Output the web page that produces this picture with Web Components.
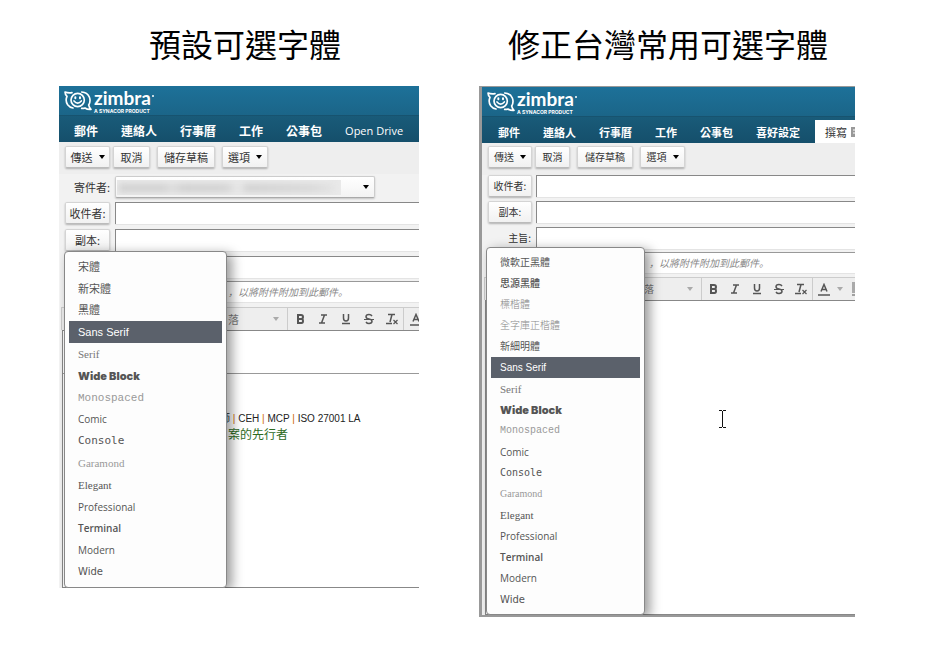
<!DOCTYPE html>
<html lang="zh-Hant">
<head>
<meta charset="utf-8">
<title>可選字體比較</title>
<style>
  body { margin: 0; background: #fff; font-family: "Liberation Sans", "Noto Sans CJK TC", sans-serif; }
</style>
</head>
<body>
<compare-board>
  <compare-column style="--lead:12px">
    <span slot="title">預設可選字體</span>
    <mail-window style="--size:11px; --nav-size:12px; --row:27px; --label:45px; --label-gap:5px; --tool:23px">
      <app-header slot="header"></app-header>
      <nav-bar slot="header">
        <nav-tab>郵件</nav-tab><nav-tab>連絡人</nav-tab><nav-tab>行事曆</nav-tab><nav-tab>工作</nav-tab><nav-tab>公事包</nav-tab><nav-tab plain>Open Drive</nav-tab>
      </nav-bar>
      <action-bar slot="header">
        <push-button arrow style="width:45px">傳送</push-button><push-button style="width:37px;margin-right:4px">取消</push-button><push-button style="width:58px;margin-right:4px">儲存草稿</push-button><push-button arrow style="width:46px">選項</push-button>
      </action-bar>
      <sender-field>寄件者:</sender-field>
      <mail-field kind="button" name="收件者">收件者:</mail-field>
      <mail-field kind="button" name="副本">副本:</mail-field>
      <mail-field kind="bare" name="主旨" style="--row:25px"></mail-field>
      <attach-hint style="--row:26px; --indent:163px">，以將附件附加到此郵件。</attach-hint>
      <editor-tools style="--format:226px; --indent:166px"></editor-tools>
      <editor-area style="--height:258px"><mail-signature></mail-signature></editor-area>
      <font-menu slot="menu" style="--top:165px; --left:5px; --width:163px; --bottom:0px">
        <font-item>宋體</font-item><font-item>新宋體</font-item><font-item>黑體</font-item>
        <font-item selected>Sans Serif</font-item>
        <font-item face="serif">Serif</font-item>
        <font-item face="block">Wide Block</font-item>
        <font-item face="mono">Monospaced</font-item>
        <font-item face="comic">Comic</font-item>
        <font-item face="console">Console</font-item>
        <font-item face="garamond">Garamond</font-item>
        <font-item face="elegant">Elegant</font-item>
        <font-item face="pro">Professional</font-item>
        <font-item face="terminal">Terminal</font-item>
        <font-item face="modern">Modern</font-item>
        <font-item face="wide">Wide</font-item>
      </font-menu>
    </mail-window>
  </compare-column>

  <compare-column style="--lead:2px">
    <span slot="title">修正台灣常用可選字體</span>
    <mail-window framed style="--size:10px; --nav-size:11px; --row:26px; --label:44px; --label-gap:4px; --tool:22px; --nav-start:16px">
      <app-header slot="header"></app-header>
      <nav-bar slot="header">
        <nav-tab>郵件</nav-tab><nav-tab>連絡人</nav-tab><nav-tab>行事曆</nav-tab><nav-tab>工作</nav-tab><nav-tab>公事包</nav-tab><nav-tab>喜好設定</nav-tab><nav-tab active>撰寫</nav-tab>
      </nav-bar>
      <action-bar slot="header" style="--pad:3px">
        <push-button arrow style="width:44px">傳送</push-button><push-button style="width:35px;margin-right:4px">取消</push-button><push-button style="width:56px;margin-right:4px">儲存草稿</push-button><push-button arrow style="width:45px">選項</push-button>
      </action-bar>
      <mail-field kind="button" name="收件者">收件者:</mail-field>
      <mail-field kind="button" name="副本">副本:</mail-field>
      <mail-field kind="label" name="主旨" style="--row:25px">主旨:</mail-field>
      <attach-hint style="--row:25px; --indent:161px">，以將附件附加到此郵件。</attach-hint>
      <editor-tools more style="--format:217px; --indent:159px"></editor-tools>
      <editor-area style="--height:315px"><text-cursor></text-cursor></editor-area>
      <font-menu slot="menu" style="--top:160px; --left:4px; --width:159px; --bottom:0px; --item:10px">
        <font-item>微軟正黑體</font-item><font-item face="bolder">思源黑體</font-item>
        <font-item face="kai">標楷體</font-item><font-item face="kai">全字庫正楷體</font-item>
        <font-item>新細明體</font-item>
        <font-item selected>Sans Serif</font-item>
        <font-item face="serif">Serif</font-item>
        <font-item face="block">Wide Block</font-item>
        <font-item face="mono">Monospaced</font-item>
        <font-item face="comic">Comic</font-item>
        <font-item face="console">Console</font-item>
        <font-item face="garamond">Garamond</font-item>
        <font-item face="elegant">Elegant</font-item>
        <font-item face="pro">Professional</font-item>
        <font-item face="terminal">Terminal</font-item>
        <font-item face="modern">Modern</font-item>
        <font-item face="wide">Wide</font-item>
      </font-menu>
    </mail-window>
  </compare-column>
</compare-board>

<script>
const CJK = '"Noto Sans CJK TC", sans-serif';
const ARROW = '<svg class="arrow" width="6" height="4" viewBox="0 0 6 4" aria-hidden="true"><path d="M0 0H6L3 4Z" fill="currentColor"/></svg>';

function define(name, css, html, setup) {
  const template = document.createElement('template');
  template.innerHTML = `<style>*{box-sizing:border-box}:host{box-sizing:border-box}${css}</style>${html}`;
  customElements.define(name, class extends HTMLElement {
    constructor() {
      super();
      this.attachShadow({ mode: 'open' }).append(template.content.cloneNode(true));
    }
    connectedCallback() { if (setup) setup(this, this.shadowRoot); }
  });
}

define('compare-board', `
  :host { display: grid; grid-template-columns: 360fr 376fr; column-gap: 60px; align-items: start; padding: 19px 71px 20px 59px; }
`, '<slot></slot>');

define('compare-column', `
  :host { display: block; min-width: 0; }
  h1 { margin: 0 0 19px; padding-left: var(--lead); text-align: center; font: 400 32px/48px ${CJK}; color: #000; white-space: nowrap; }
`, '<h1><slot name="title"></slot></h1><slot></slot>');

define('mail-window', `
  :host { display: block; position: relative; background: #f2f2f2; color: #333; font-size: var(--size); }
  :host([framed]) { border: solid #999; border-width: 1px 0 2px 3px; }
  .clip { overflow: hidden; }
`, '<div class="clip"><slot name="header"></slot><slot></slot></div><slot name="menu"></slot>');

define('app-header', `
  :host { display: flex; height: 30px; padding: 2px 0 0 5px; gap: 2px; color: #fff; background: linear-gradient(#1d7199, #1b6588); border-bottom: 1px solid #17536f; }
  .mark { margin-top: 3px; }
  .name { display: flex; font: 700 19px/20px Lato, sans-serif; }
  .name i { width: 2px; height: 2px; margin: 7px 0 0 1px; border-radius: 1px; background: #fff; }
  .words { display: flex; flex-direction: column; }
  small { font: 700 5px/6px Inter, sans-serif; white-space: nowrap; }
`, `
  <svg class="mark" width="28" height="20" viewBox="0 0 84 60" fill="none" stroke="#fff" stroke-width="5" stroke-linejoin="round" stroke-linecap="round" aria-hidden="true">
    <circle cx="41" cy="27" r="20"/>
    <path d="M24 5Q13 7 3 3Q3 10 9 16Q3 29 11 41Q17 49 27 51"/>
    <path d="M53 3Q70 4 76 18Q81 31 74 42Q76 51 81 55Q70 56 63 51Q58 53 53 52"/>
    <path d="M30 30Q41 43 52 30"/>
    <path d="M34 19V22M48 19V22" stroke-width="6"/>
  </svg>
  <div class="words"><span class="name">zimbra<i></i></span><small>A SYNACOR PRODUCT</small></div>`);

define('nav-bar', `
  :host { display: block; }
  nav { display: flex; height: 26px; gap: 23px; padding-left: var(--nav-start, 15px); background: linear-gradient(#195b79, #154f6b); overflow: hidden; }
`, '<nav aria-label="主選單"><slot></slot></nav>');

define('nav-tab', `
  :host { display: block; flex: none; }
  a { display: flex; align-items: center; height: 26px; padding-top: 3px; color: #fff; text-decoration: none; font: 700 var(--nav-size)/20px ${CJK}; white-space: nowrap; }
  :host([plain]) a { font: 400 11px/20px "Open Sans", sans-serif; }
  :host([active]) { margin: 3px 0 0 -8px; }
  :host([active]) a { height: 23px; gap: 4px; padding: 0 0 0 10px; width: 80px; background: #fff; color: #333; font-weight: 400; }
  svg { display: none; }
  :host([active]) svg { display: block; }
`, `<a href="#"><slot></slot><svg width="10" height="10" viewBox="0 0 10 10" aria-hidden="true"><rect width="10" height="10" fill="#999"/><path d="M2 3H8M2 6H8" stroke="#fff"/></svg></a>`);

define('action-bar', `
  :host { display: flex; gap: 3px; height: 32px; padding: var(--pad, 4px) 6px; background: #eee; }
`, '<slot></slot>');

define('push-button', `
  :host { display: block; }
  button { display: flex; align-items: center; justify-content: center; gap: 6px; width: 100%; height: 22px; padding: 0; border: 1px solid #d4d4d4; border-bottom-color: #bbb; border-radius: 2px; background: linear-gradient(#fff, #f1f1f1); box-shadow: 0 1px 2px #0004; color: #333; font: 400 var(--size)/16px ${CJK}; white-space: nowrap; }
  .arrow { display: none; color: #000; }
  :host([arrow]) .arrow { display: block; }
`, `<button type="button"><slot></slot>${ARROW}</button>`);

const FIELD = `
  :host { display: grid; grid-template-columns: var(--label) 1fr; column-gap: var(--label-gap); height: var(--row); padding-left: 6px; }
  label { display: block; align-self: start; text-align: right; font: 400 var(--size)/22px ${CJK}; }
`;
define('mail-field', FIELD + `
  input { display: block; width: 100%; height: 22px; border: solid #888; border-width: 1px 0 0 1px; border-radius: 0; background: #fff; padding: 0 4px; outline: 0; box-shadow: 0 1px #e4e4e4; }
  label { padding-right: 1px; }
`, '<div class="lead"></div><input id="f" type="text">', (host, root) => {
  const kind = host.getAttribute('kind');
  const lead = root.querySelector('.lead');
  if (kind === 'button') lead.innerHTML = '<push-button><slot></slot></push-button>';
  if (kind === 'label') lead.innerHTML = '<label for="f"><slot></slot></label>';
  else root.querySelector('input').setAttribute('aria-label', host.getAttribute('name'));
});

define('sender-field', FIELD + `
  :host { height: 28px; padding-top: 2px; }
  .box { display: grid; align-items: center; width: 260px; height: 22px; }
  .box > * { grid-area: 1 / 1; }
  select { appearance: none; width: 100%; height: 22px; border: 1px solid #ccc; border-bottom-color: #aaa; border-radius: 2px; box-shadow: 0 1px 2px #0003; background: linear-gradient(#fff, #f3f3f3); }
  .mask { width: 224px; height: 15px; margin-left: 2px; pointer-events: none; background: #e9e9e9; overflow: hidden; }
  .mask i { display: block; height: 8px; margin: 4px 8px 0 2px; filter: blur(3px); background: linear-gradient(90deg, #d0d0d0 20%, #dcdcdc 25%, #cfcfcf 30%, #d2d2d2 50%, #e9e9e9 56%, #d0d0d0 60%, #d8d8d8 90%, #e2e2e2); }
  .arrow { justify-self: end; margin-right: 6px; color: #000; pointer-events: none; }
`, `<label for="s"><slot></slot></label><div class="box"><select id="s"><option></option></select><span class="mask"><i></i></span>${ARROW}</div>`);

define('attach-hint', `
  :host { display: block; height: var(--row); padding-left: 6px; }
  p { margin: 0; height: 21px; padding-left: var(--indent); background: #fff; border-top: 1px solid #999; box-shadow: 0 1px #e4e4e4; font: italic 400 10px/20px "Noto Sans CJK SC", sans-serif; color: #888; white-space: nowrap; }
`, '<p lang="zh-Hans"><slot></slot></p>', host => { host.lang = 'zh-Hans'; });

define('editor-tools', `
  :host { display: flex; align-items: stretch; height: 23px; margin-left: 2px; background: #eee; border: solid #ccc; border-width: 1px 0 0 1px; color: #555; overflow: hidden; }
  .format { flex: none; display: grid; align-items: center; width: var(--format); border-right: 1px solid #ccc; padding-left: var(--indent); }
  .format > * { grid-area: 1 / 1; }
  select { appearance: none; width: 100%; height: 20px; padding: 0; border: 0; background: none; font: 400 var(--size)/16px ${CJK}; color: #777; }
  .arrow { color: #aaa; justify-self: end; margin-right: 8px; pointer-events: none; }
  button { flex: none; display: grid; place-items: center; width: var(--tool); padding: 0; border: 0; background: none; color: #555; }
  .sep { flex: none; width: 1px; background: #ccc; }
  .more { display: none; }
  :host([more]) .more { display: flex; align-items: center; flex: none; gap: 9px; }
  .more .arrow { margin: 0 0 0 2px; }
`, `
  <div class="format"><select aria-label="段落格式"><option>落</option></select>${ARROW}</div>
  <button type="button" aria-label="粗體"><svg width="12" height="12" viewBox="0 0 12 12" fill="none" stroke="currentColor" stroke-width="2"><path d="M4 2H7Q9 2 9 4Q9 6 7 6H4ZM4 6H7.5Q9 6 9 8Q9 10 7.5 10H4Z"/></svg></button>
  <button type="button" aria-label="斜體"><svg width="12" height="12" viewBox="0 0 12 12" fill="none" stroke="currentColor" stroke-width="1.5"><path d="M4 2H10M2 10H8M7.5 2L4.5 10"/></svg></button>
  <button type="button" aria-label="底線"><svg width="12" height="12" viewBox="0 0 12 12" fill="none" stroke="currentColor" stroke-width="1.5"><path d="M3.5 1V5Q3.5 8 6 8Q8.5 8 8.5 5V1M2 10.5H10"/></svg></button>
  <button type="button" aria-label="刪除線"><svg width="12" height="12" viewBox="0 0 12 12" fill="none" stroke="currentColor" stroke-width="1.5"><path d="M9 3Q8 1.5 6 1.5Q3 1.5 3 3.7Q3 5.5 6 6Q9 6.5 9 8.3Q9 10.5 6 10.5Q4 10.5 3 9"/><path d="M1 6.5H11" stroke-width="1"/></svg></button>
  <button type="button" aria-label="清除格式"><svg width="14" height="12" viewBox="0 0 14 12" fill="none" stroke="currentColor" stroke-width="1.5"><path d="M3 1.5H10M7 1.5L5 9M1 10.5H7"/><path d="M8.5 7L12.5 11M12.5 7L8.5 11" stroke-width="1.2"/></svg></button>
  <span class="sep"></span>
  <button type="button" aria-label="文字顏色"><svg width="12" height="13" viewBox="0 0 12 13" fill="none" stroke="currentColor" stroke-width="1.5"><path d="M3 8.5L6 1.5L9 8.5M4 6.5H8"/><path d="M0 12H12"/></svg></button>
  <span class="more">${ARROW}<svg width="12" height="14" viewBox="0 0 12 14" aria-hidden="true"><rect width="12" height="11" fill="#aaa"/><path d="M0 13H12" stroke="#555"/></svg></span>`);

define('editor-area', `
  :host { display: block; position: relative; height: var(--height); margin-left: 3px; background: #fff; border: solid #888; border-width: 1px 0 1px 1px; }
`, '<slot></slot>');

define('mail-signature', `
  :host { display: block; }
  hr { margin: 42px 0 38px; border: 0; border-top: 1px solid #999; }
  p { margin: 0; padding-left: 157px; font: 400 10px/14px "Liberation Sans", ${CJK}; color: #222; white-space: nowrap; }
  p + p { padding-left: 165px; font: 400 12px/16px ${CJK}; color: #2e6b1e; }
  b { font-weight: 400; color: #c60; }
`, '<hr><p>師 <b>|</b> CEH <b>|</b> MCP <b>|</b> ISO 27001 LA</p><p>案的先行者</p>');

define('text-cursor', `
  :host { position: absolute; left: 233px; top: 109px; }
  svg { display: block; }
`, '<svg width="7" height="18" viewBox="0 0 7 18" fill="none" stroke="#111" aria-hidden="true"><path d="M0 .5H3M4 .5H7M0 17.5H3M4 17.5H7M3.5 1V17"/></svg>');

define('font-menu', `
  :host { position: absolute; top: var(--top); left: var(--left); bottom: var(--bottom); width: var(--width); display: flex; flex-direction: column; padding: 4px; background: #fdfdfd; border: 1px solid #888; border-radius: 4px; box-shadow: 5px 3px 12px #0006; clip-path: inset(-10px -20px 0 -4px); }
`, '<slot></slot>', host => host.setAttribute('role', 'menu'));

define('font-item', `
  :host { display: flex; flex: 1 1 0; min-height: 0; }
  button { width: 100%; padding: 0 9px; border: 0; background: none; text-align: left; color: #555; white-space: nowrap; font: 400 11px/16px "Liberation Sans", ${CJK}; font-size: var(--item, 11px); }
  :host([selected]) button { background: #5b616b; color: #fff; }
  :host([face="serif"]) button { font-family: "Liberation Serif", serif; font-size: 11px; color: #777; }
  :host([face="block"]) button { font-family: Inter, sans-serif; font-size: 11px; font-weight: 900; }
  :host([face="mono"]) button { font-family: "Liberation Mono", monospace; color: #999; }
  :host([face="comic"]) button { font-family: "Open Sans", sans-serif; font-size: 10px; }
  :host([face="console"]) button { font-family: "DejaVu Sans Mono", monospace; }
  :host([face="garamond"]) button { font-family: "Liberation Serif", serif; color: #999; }
  :host([face="elegant"]) button { font-family: "Liberation Serif", serif; font-size: 11px; }
  :host([face="pro"]) button { font-family: "Open Sans", sans-serif; font-size: 10px; }
  :host([face="terminal"]) button { font-family: "Open Sans", sans-serif; font-size: 10px; font-weight: 600; }
  :host([face="modern"]) button { font-family: "Open Sans", sans-serif; font-size: 10px; }
  :host([face="wide"]) button { font-family: "DejaVu Sans", sans-serif; font-size: 10px; }
  :host([face="kai"]) button { color: #888; font-weight: 300; }
  :host([face="bolder"]) button { font-weight: 500; }
`, '<button type="button" role="menuitem"><slot></slot></button>');
</script>
</body>
</html>
